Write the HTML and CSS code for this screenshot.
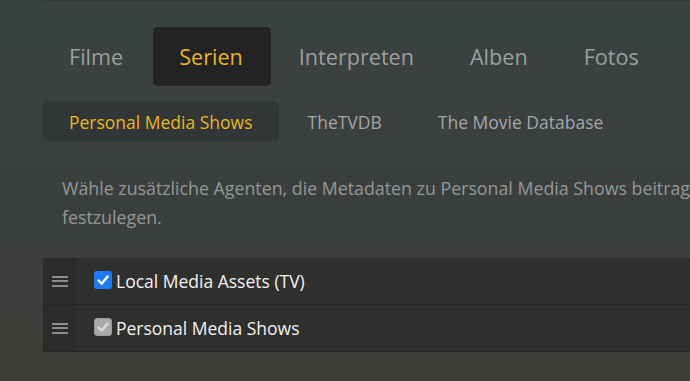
FILE: index.html
```html
<!DOCTYPE html>
<html lang="de">
<head>
<meta charset="utf-8">
<link rel="stylesheet" href="styles.css">
</head>
<body>
<div class="page">
  <nav class="tabs">
    <div class="tab">Filme</div>
    <div class="tab active">Serien</div>
    <div class="tab">Interpreten</div>
    <div class="tab">Alben</div>
    <div class="tab">Fotos</div>
  </nav>
  <nav class="subtabs">
    <div class="subtab active">Personal Media Shows</div>
    <div class="subtab">TheTVDB</div>
    <div class="subtab">The Movie Database</div>
  </nav>
  <p class="desc">Wähle zusätzliche Agenten, die Metadaten zu Personal Media Shows beitragen sollen, und ziehe sie, um deren Reihenfolge festzulegen.</p>
  <ul class="agents">
    <li class="agent">
      <span class="handle"><i></i><i></i><i></i></span>
      <span class="body">
        <span class="check on"><svg viewBox="0 0 18 18"><path d="M4.5 9.5 L7.8 12.6 L13.6 5.4" /></svg></span>
        <span class="label">Local Media Assets (TV)</span>
      </span>
    </li>
    <li class="agent">
      <span class="handle"><i></i><i></i><i></i></span>
      <span class="body">
        <span class="check off"><svg viewBox="0 0 18 18"><path d="M4.5 9.5 L7.8 12.6 L13.6 5.4" /></svg></span>
        <span class="label">Personal Media Shows</span>
      </span>
    </li>
  </ul>
</div>
</body>
</html>
```
FILE: styles.css
```css
html, body {
  margin: 0;
  padding: 0;
  height: 100%;
  overflow: hidden;
}
body {
  background: linear-gradient(180deg, #3a4242 0%, #3a3f3e 55%, #3e3c38 100%);
  font-family: "Open Sans", "Noto Sans", sans-serif;
  color: #999;
}
.page {
  width: 1200px;
  margin-left: 43px;
  border-top: 1px solid #323837;
  padding-top: 26px;
}
.tabs {
  display: flex;
  gap: 2px;
}
.tab {
  height: 59px;
  padding: 0 28px 0 26px;
  display: flex;
  align-items: center;
  font-size: 21.6px;
  color: #9e9e9e;
  border-radius: 5px;
}
.tab.active {
  background: #232323;
  color: #e8b526;
}
.subtabs {
  display: flex;
  gap: 2px;
  margin-top: 16px;
}
.subtab {
  height: 39px;
  padding: 0 26px;
  display: flex;
  align-items: center;
  font-size: 17.5px;
  color: #a5a5a5;
  border-radius: 5px;
}
.subtab.active {
  background: #323636;
  color: #e8b526;
}
.subtab + .subtab {
  padding: 0 27px 0 27px;
}
.desc {
  margin: 33px 0 0 19px;
  width: 1050px;
  font-size: 17.8px;
  line-height: 29px;
  color: #959797;
}
.agents {
  list-style: none;
  margin: 26px 0 0;
  padding: 0;
}
.agent {
  display: flex;
  height: 46px;
  border-bottom: 1px solid #242423;
  background: #2f302e;
}
.handle {
  width: 34px;
  background: #2a2b2a;
  display: flex;
  flex-direction: column;
  align-items: center;
  justify-content: center;
  gap: 2.5px;
}
.handle i {
  display: block;
  width: 16px;
  height: 2px;
  background: #8c8c8c;
}
.body {
  display: flex;
  align-items: center;
  padding-left: 17px;
}
.check {
  width: 18px;
  height: 18px;
  border-radius: 3px;
  display: block;
  box-sizing: border-box;
  margin-top: -3px;
}
.check svg {
  display: block;
  width: 18px;
  height: 18px;
}
.check path {
  fill: none;
  stroke-width: 2.4;
  stroke-linecap: round;
  stroke-linejoin: round;
}
.check.on {
  background: #1e7af2;
}
.check.on path {
  stroke: #fff;
}
.check.off {
  background: #a9a9a9;
  border: 1px solid #9a9a9a;
}
.check.off svg {
  margin: -1px;
}
.check.off path {
  stroke: #d9d9d9;
}
.label {
  margin-left: 4px;
  font-size: 17.5px;
  color: #f2f2f2;
}
```
